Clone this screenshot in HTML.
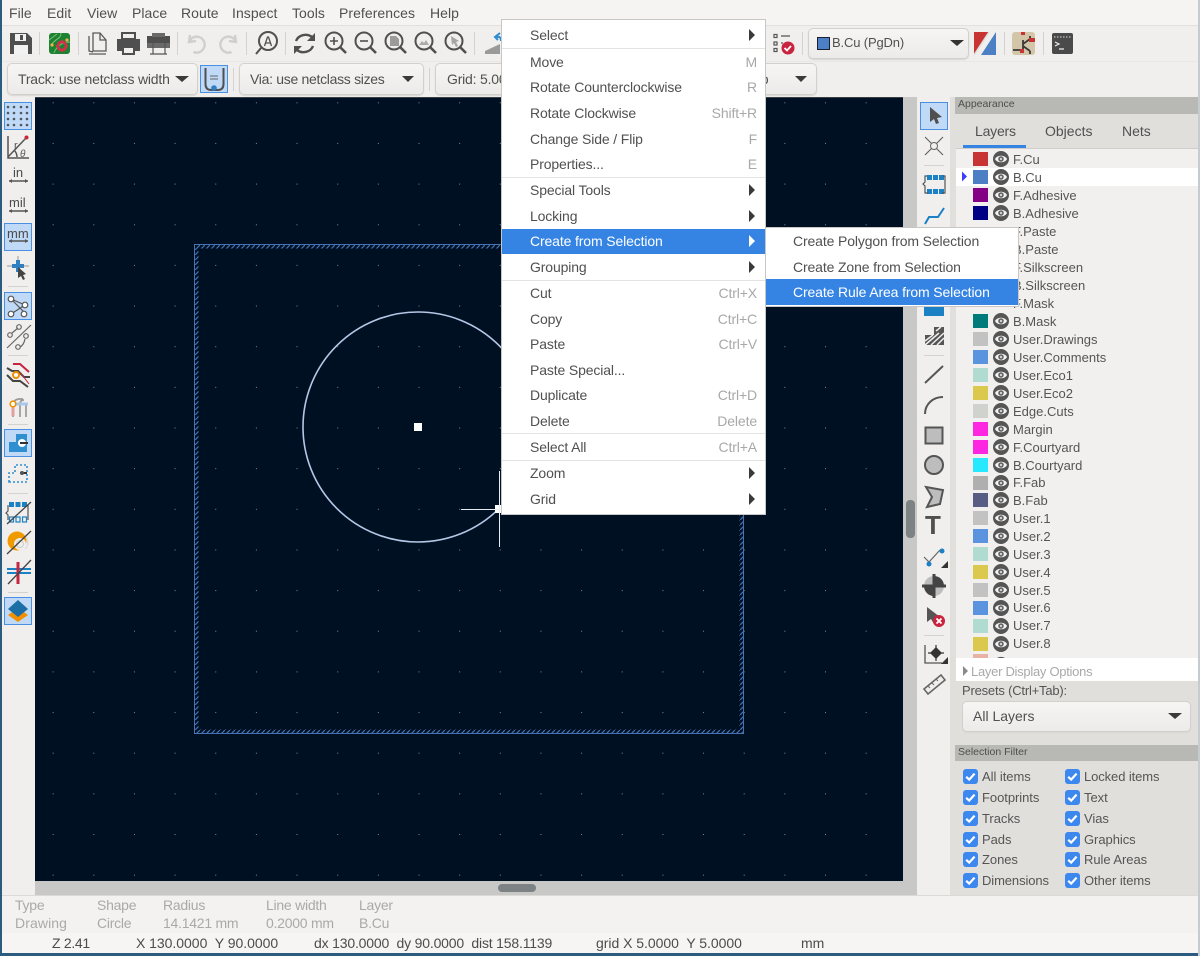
<!DOCTYPE html>
<html><head><meta charset="utf-8"><style>
html,body{margin:0;padding:0;width:1200px;height:956px;overflow:hidden;background:#f2f1ef}
body{position:relative;font:14px/18px "Liberation Sans",sans-serif;color:#505050}
.b,.t{position:absolute}
.t{white-space:nowrap}
.m{font-size:14px;letter-spacing:.05px}
.combo{position:absolute;box-sizing:border-box;background:linear-gradient(#f6f5f4,#edebe9);border:1px solid #d3cfcb;border-radius:5px;box-shadow:0 1px 1px #d8d6d3}
.menu{position:absolute;box-sizing:border-box;background:#fff;border:1px solid #c9c7c5;letter-spacing:-.13px}
.menu .t{color:#505050}
.menu .s{color:#a8a8a8}
.g{color:#a9a9a9;font-size:14px;letter-spacing:-.25px}
.st{color:#4c4c4c;font-size:14px;letter-spacing:-.03px}
.ly{font-size:13px;color:#555;margin-top:1px}
.sf{font-size:13px;color:#555;letter-spacing:-.05px}
.u{font-size:13px;color:#4a4a4a}
</style></head><body>
<!-- backgrounds -->
<div class="b" style="left:0;top:0;width:1200px;height:25px;background:#f5f4f2"></div>
<div class="b" style="left:0;top:25px;width:1200px;height:1px;background:#e2e0dd"></div>
<div class="b" style="left:0;top:26px;width:1200px;height:71px;background:#f0efed"></div>
<div class="b" style="left:0;top:61px;width:1200px;height:1px;background:#e9e7e5"></div>
<div class="b" style="left:2px;top:97px;width:33px;height:800px;background:#f0efed"></div>
<div class="b" style="left:35px;top:97px;width:868px;height:784px;background:#001023"></div>
<div class="b" style="left:35px;top:97px;width:868px;height:1px;background:#3a3f46"></div>
<div class="b" style="left:903px;top:97px;width:14px;height:798px;background:#c8c8c7"></div>
<div class="b" style="left:35px;top:881px;width:882px;height:14px;background:#c8c8c7"></div>
<div class="b" style="left:906px;top:500px;width:9px;height:38px;border-radius:4px;background:#7d8384"></div>
<div class="b" style="left:498px;top:884px;width:38px;height:8px;border-radius:4px;background:#7d8384"></div>
<div class="b" style="left:917px;top:97px;width:33px;height:798px;background:#f0efed"></div>
<div class="b" style="left:950px;top:97px;width:5px;height:798px;background:#e0dfdc"></div>
<div class="b" style="left:955px;top:97px;width:243px;height:798px;background:#e1dfdb"></div>
<div class="b" style="left:955px;top:97px;width:243px;height:17px;background:#b8b8b5"></div>
<div class="b" style="left:956px;top:148px;width:242px;height:510px;background:#f1f0ee"></div>
<div class="b" style="left:956px;top:168px;width:242px;height:18px;background:#fff"></div>
<div class="b" style="left:956px;top:658px;width:242px;height:23px;background:#fff"></div>
<div class="b" style="left:955px;top:745px;width:243px;height:16px;background:#b8b8b5"></div>
<div class="b" style="left:0;top:895px;width:1200px;height:38px;background:#f3f2f0"></div>
<div class="b" style="left:0;top:895px;width:1200px;height:1px;background:#dcdad7"></div>
<div class="b" style="left:0;top:933px;width:1200px;height:21px;background:#f6f5f4"></div>
<div class="b" style="left:0;top:953px;width:1200px;height:3px;background:#2c5b80"></div>
<div class="b" style="left:0;top:0;width:2px;height:956px;background:#2c5b80"></div>
<div class="b" style="left:1198px;top:0;width:2px;height:956px;background:#c5cbd0"></div>

<!-- active buttons -->
<div class="b" style="left:200px;top:65px;width:28px;height:28px;box-sizing:border-box;background:#bfd9f6;border:1px solid #4a90e2"></div>
<div class="b" style="left:4px;top:102px;width:28px;height:28px;box-sizing:border-box;background:#bfd9f6;border:1px solid #4a90e2"></div>
<div class="b" style="left:4px;top:223px;width:28px;height:28px;box-sizing:border-box;background:#bfd9f6;border:1px solid #4a90e2"></div>
<div class="b" style="left:4px;top:292px;width:28px;height:28px;box-sizing:border-box;background:#bfd9f6;border:1px solid #4a90e2"></div>
<div class="b" style="left:4px;top:429px;width:28px;height:28px;box-sizing:border-box;background:#bfd9f6;border:1px solid #4a90e2"></div>
<div class="b" style="left:4px;top:597px;width:28px;height:28px;box-sizing:border-box;background:#bfd9f6;border:1px solid #4a90e2"></div>
<div class="b" style="left:920px;top:102px;width:28px;height:28px;box-sizing:border-box;background:#bfd9f6;border:1px solid #4a90e2"></div>

<!-- combos -->
<div class="combo" style="left:7px;top:63px;width:191px;height:32px"></div>
<div class="combo" style="left:239px;top:63px;width:185px;height:32px"></div>
<div class="combo" style="left:435px;top:63px;width:382px;height:32px"></div>
<div class="combo" style="left:808px;top:28px;width:161px;height:31px"></div>
<div class="combo" style="left:962px;top:701px;width:229px;height:31px"></div>

<svg class="b" style="left:0;top:0" width="1200" height="956" viewBox="0 0 1200 956">
<defs>
<pattern id="grid" patternUnits="userSpaceOnUse" x="12" y="21" width="40.65" height="40.65"><rect x="0" y="0" width="1" height="1" fill="#7d8794"/></pattern>
<pattern id="hatch" patternUnits="userSpaceOnUse" x="0" y="0" width="5" height="5"><path d="M-1 6L6 -1" stroke="#4070b0" stroke-width="1.300" fill="none"/></pattern>
<symbol id="eye" viewBox="0 0 16 16" overflow="visible"><circle cx="8" cy="8" r="8" fill="#555"/><path d="M2 8C4 3.600 12 3.600 14 8 12 12.400 4 12.400 2 8z" fill="#f4f4f4"/><circle cx="8" cy="8" r="2.800" fill="#666"/><circle cx="8" cy="8" r="1.100" fill="#ddd"/></symbol>
<symbol id="cb" viewBox="0 0 15 15" overflow="visible"><rect x="0" y="0" width="15" height="15" rx="3" fill="#3c88ee"/><path d="M3.2 7.8l3 2.8 5.4-6" fill="none" stroke="#fff" stroke-width="2.2"/></symbol>
</defs>
<!-- canvas -->
<rect x="35" y="98" width="868" height="783" fill="url(#grid)"/>
<rect x="196.500" y="246.500" width="545" height="485" fill="none" stroke="url(#hatch)" stroke-width="4"/>
<rect x="194.500" y="244.500" width="549" height="489" fill="none" stroke="#4573b4" stroke-width="1"/>
<circle cx="418" cy="427" r="115" fill="none" stroke="#b4c8e6" stroke-width="1.600"/>
<rect x="414" y="423" width="8" height="8" fill="#fff"/>
<rect x="495" y="505" width="8" height="8" fill="#fff"/>
<path d="M461 509.500H499M499.500 471V547" stroke="#e8edf4" stroke-width="1" fill="none"/>

<!-- separators top -->
<g stroke="#d4d2cf" stroke-width="1">
<path d="M39.500 32V55M78.500 32V55M177.500 32V55M246.500 32V55M285.500 32V55M474.500 32V55M802.500 32V55M1004.500 32V55M1043.500 32V55M233.500 68V91M429.500 68V91"/>
<path d="M8 286.500H28M8 355.500H28M8 424.500H28M8 493.500H28M8 592.500H28M924 165.500H944M924 355.500H944M924 635.500H944"/>
</g>
<!-- top icons -->
<path d="M10 33h17l5 5v16H10z" fill="#4f4f4f"/><rect x="15" y="34" width="11" height="7" fill="#f2f2f2"/><rect x="20" y="35" width="3" height="5" fill="#4f4f4f"/><rect x="14" y="45" width="14" height="9" fill="#f2f2f2"/>
<rect x="49" y="33" width="21" height="21" rx="3" fill="#1d8232"/><path d="M49 40l8-6M61 33c0 6-5 5-10 12M70 42c-8 0-14 5-16 11" stroke="#7fbf75" fill="none"/><circle cx="62" cy="46" r="4" fill="none" stroke="#d3304a" stroke-width="2.600"/><path d="M62 40v2M62 50v2M56 46h2M66 46h2M58 42l1 1M66 50l-1-1M66 42l-1 1M58 50l1-1" stroke="#d3304a" stroke-width="2"/><circle cx="52" cy="45" r="1.600" fill="#e7b34c"/><circle cx="67" cy="40" r="1.600" fill="#e7b34c"/>
<g fill="none" stroke="#5a5a5a" stroke-width="1.300"><path d="M93 33h7l6 7v11H93z"/><path d="M89 36v15l4 1M100 33v7h6M89 54h17"/></g>
<path d="M122 33h13v6h-13z" fill="none" stroke="#4f4f4f" stroke-width="2"/><path d="M117 39h23v12h-5v-5h-13v5h-5z" fill="#4f4f4f"/><rect x="123" y="47" width="11" height="7" fill="none" stroke="#4f4f4f" stroke-width="2"/>
<path d="M147 36h23v7h-23z" fill="#4f4f4f"/><path d="M152 33h13v4h-13z" fill="#6a6a6a"/><path d="M147 43h23v5h-23z" fill="#6a6a6a"/><path d="M153 43v11M165 43v11M150 54h17" stroke="#555" fill="none" stroke-width="1.200"/>
<g fill="none" stroke="#cfcfcd" stroke-width="2.400"><path d="M190 35l-1 7 7-1M189.500 41a8 8 0 1 1 4 11"/><path d="M235 35l1 7-7-1M235.500 41a8 8 0 1 0-4 11"/></g>
<g fill="none" stroke="#505050" stroke-width="2"><circle cx="268" cy="41" r="9"/><path d="M261 48l-5 6"/></g><path d="M264.500 46l3-9h1l3 9M265.500 43h5" fill="none" stroke="#505050" stroke-width="1.300"/>
<g fill="none" stroke="#505050" stroke-width="2.400"><path d="M296 41a10 9 0 0 1 16-4M313 46a10 9 0 0 1-16 4"/></g><path d="M315 33v8h-8zM294 54v-8h8z" fill="#505050"/>
<g fill="none" stroke="#505050" stroke-width="2"><circle cx="334" cy="41" r="8.500"/><path d="M340 47l6 6" stroke-width="2.600"/><path d="M330 41h8M334 37v8" stroke-width="1.600"/><circle cx="364" cy="41" r="8.500"/><path d="M370 47l6 6" stroke-width="2.600"/><path d="M360 41h8" stroke-width="1.600"/><circle cx="394" cy="41" r="8.500"/><path d="M400 47l6 6" stroke-width="2.600"/><circle cx="424" cy="41" r="8.500"/><path d="M430 47l6 6" stroke-width="2.600"/><circle cx="454" cy="41" r="8.500"/><path d="M460 47l6 6" stroke-width="2.600"/></g>
<path d="M390 36h6l3 3v7h-9z" fill="#9b9b9b"/><path d="M419 45l3-4 2 2 2-3 3 5z" fill="#aaa"/><path d="M451 36l8 5-3 1 2 4-2 1-2-4-2 2z" fill="#a5a5a5"/>
<path d="M485 51l15-7v10h-15z" fill="#9a9a9a"/><path d="M500 33l-5 4 3 3M496 37c4-1 5 1 5 4" fill="none" stroke="#2f8bd0" stroke-width="2"/>
<!-- checklist -->
<g fill="none" stroke="#555" stroke-width="1.200"><rect x="774" y="34.500" width="3" height="3"/><rect x="774" y="42" width="3" height="3"/><rect x="774" y="48.500" width="3" height="3"/><path d="M781 36h9M781 43h2"/></g><circle cx="788" cy="48" r="6.500" fill="#c8233f"/><path d="M784.500 48l2.500 2.500 4-4.500" fill="none" stroke="#fff" stroke-width="1.800"/>
<rect x="817.500" y="37.500" width="12" height="12" fill="#4d7fc4" stroke="#1a2030"/>
<path d="M950 40h14l-7 6z" fill="#333"/><path d="M175 76h14l-7 6z" fill="#3a3a3a"/><path d="M402 76h12l-6 6z" fill="#3a3a3a"/><path d="M795 76h12l-6 6z" fill="#3a3a3a"/><path d="M1168 713h14l-7 6z" fill="#3a3a3a"/>
<path d="M974 32h15l-15 23z" fill="#c83434"/><path d="M996 32v23h-15l15-23z" fill="#4d7fc4"/><path d="M989 32l-15 23" stroke="#ddd" stroke-width="1.500"/>
<rect x="1012" y="32" width="23" height="23" rx="3" fill="#d3c5a8"/><path d="M1013 50h10M1023 40v10M1023 44l7-5M1023 46l7 5M1030 36v4M1030 51v3" stroke="#3a3a3a" stroke-width="1.800" fill="none"/><rect x="1021" y="32" width="4" height="3" fill="#c83434"/><rect x="1029" y="38" width="6" height="4" fill="#c83434"/><rect x="1020" y="49" width="4" height="4" fill="#c83434"/>
<rect x="1052" y="33" width="21" height="21" rx="2" fill="#4a4a4a"/><path d="M1054 37h17" stroke="#ddd" stroke-dasharray="1.500 1.500" stroke-width="1"/><path d="M1055 42l4 2-4 2M1059 49h5" fill="none" stroke="#eee" stroke-width="1.200"/>
<!-- track width button -->
<path d="M205.500 68V84q0 6 6 6h6q6 0 6-6V68" fill="none" stroke="#505050" stroke-width="2"/><path d="M210 76h8M210 79h8" stroke="#666" stroke-width="1"/><circle cx="214" cy="88" r="2.800" fill="#2f7fc1"/>
<!-- left icons -->
<g fill="#4f5760"><circle cx="8" cy="107" r="1.300"/><circle cx="14" cy="107" r="1.300"/><circle cx="21" cy="107" r="1.300"/><circle cx="27" cy="107" r="1.300"/><circle cx="8" cy="113" r="1.300"/><circle cx="14" cy="113" r="1.300"/><circle cx="21" cy="113" r="1.300"/><circle cx="27" cy="113" r="1.300"/><circle cx="8" cy="119" r="1.300"/><circle cx="14" cy="119" r="1.300"/><circle cx="21" cy="119" r="1.300"/><circle cx="27" cy="119" r="1.300"/><circle cx="8" cy="125" r="1.300"/><circle cx="14" cy="125" r="1.300"/><circle cx="21" cy="125" r="1.300"/><circle cx="27" cy="125" r="1.300"/></g>
<path d="M8 136v22h21M8 157l18-19M17 157c0-3-1-5-3-7" fill="none" stroke="#555" stroke-width="1.500"/><circle cx="26.500" cy="137.500" r="2" fill="#c8233f"/>
<g fill="none" stroke="#555" stroke-width="1.500"><path d="M9 181h19M9 211h19M9 241h19"/></g>
<path d="M9 181l3-2v4zM28 181l-3-2v4zM9 211l3-2v4zM28 211l-3-2v4zM9 241l3-2v4zM28 241l-3-2v4z" fill="#555"/>
<path d="M7 266h22M18 256v10" stroke="#999" stroke-width="1"/><rect x="12" y="264" width="12" height="4" fill="#2f7fc1"/><rect x="16" y="260" width="4" height="12" fill="#2f7fc1"/><path d="M18 267l8 7-3 1 2 4-2 1-2-4-3 2z" fill="#444"/>
<!-- ratsnest -->
<g fill="#fff" stroke="#555" stroke-width="1.200"><path d="M11 299l15 15M11 314l14-9M11 299l14 6" fill="none"/><circle cx="11" cy="299" r="2.800"/><circle cx="25" cy="305" r="2.800"/><circle cx="11" cy="314" r="2.800"/><circle cx="24" cy="314" r="2.800"/></g>
<g fill="none" stroke="#666" stroke-width="1.200"><path d="M7 348l24-23"/><circle cx="10" cy="335" r="2.300"/><circle cx="19" cy="327" r="2.300"/><circle cx="26" cy="336" r="2.300"/><circle cx="18" cy="347" r="2.300"/><path d="M12 333l6-5M25 339c-1 5-3 7-5 8"/></g>
<!-- highlight -->
<g fill="none" stroke-width="2"><path d="M7 368l5 3h6l6 6h6" stroke="#444"/><path d="M13 364h7l9 8" stroke="#c8233f"/><path d="M7 375l6 6h7l8 6" stroke="#444"/><path d="M20 372l9 12" stroke="#c8233f" stroke-width="1"/></g><circle cx="16" cy="375" r="3" fill="#fff" stroke="#f09000" stroke-width="2"/>
<g fill="none" stroke="#9a9a9a" stroke-width="1.700"><path d="M13 417v-11q0-7 7-7h3"/><path d="M20 417v-13q0-4 4-4M26 417v-12"/></g><path d="M13 407v9" stroke="#e3a0a0" stroke-width="3"/><path d="M13 404h15" stroke="#a8c8e8" stroke-width="3"/><circle cx="13" cy="404" r="2.800" fill="#fff" stroke="#f09000" stroke-width="1.600"/>
<!-- zones left -->
<path d="M9 452v-10h7v-8h11v18z" fill="#2f8fd0"/><circle cx="22" cy="443" r="4" fill="#fff"/><path d="M20 443h8" stroke="#333" stroke-width="2"/>
<path d="M9 482v-9h6v-8h12v17z" fill="none" stroke="#2f8fd0" stroke-width="1.600" stroke-dasharray="2 2"/><path d="M20 473h7" stroke="#333" stroke-width="2"/><circle cx="22" cy="473" r="2" fill="#555"/>
<!-- footprint off -->
<g><rect x="9" y="502" width="5" height="5" fill="#1b80c4"/><rect x="15.500" y="502" width="5" height="5" fill="#1b80c4"/><rect x="22" y="502" width="5" height="5" fill="#1b80c4"/><g fill="none" stroke="#1b80c4" stroke-width="1.200"><rect x="9.500" y="517" width="4" height="5"/><rect x="16" y="517" width="4" height="5"/><rect x="22.500" y="517" width="4" height="5"/></g><path d="M8 505v6l-2 2 2 2v5M28 505v15" fill="none" stroke="#555" stroke-width="1.200"/><path d="M7 524l24-22" stroke="#444" stroke-width="1.300"/></g>
<circle cx="17" cy="541" r="9.500" fill="#f09a00"/><circle cx="20" cy="544" r="6" fill="#f0efed"/><circle cx="20" cy="544" r="3.500" fill="none" stroke="#ccc"/><path d="M26 537a9 9 0 0 1-1 12" fill="none" stroke="#ddd" stroke-width="1.500"/><path d="M7 554l24-23" stroke="#444" stroke-width="1.300"/>
<path d="M7 569h24M7 573h24" stroke="#1b80c4" stroke-width="2"/><path d="M18 562v22" stroke="#c8233f" stroke-width="3"/><path d="M8 584l23-24" stroke="#444" stroke-width="1.300"/>
<path d="M18 608l10 7-10 7-10-7z" fill="#f09000"/><path d="M18 600l10 9-10 8-10-8z" fill="#1b6ea6"/>
<!-- right icons -->
<path d="M930 107l0 15 4-3 2 5 3-1-2-5 5-1z" fill="#4f4f4f"/>
<path d="M925 137l18 18M943 137l-18 18" stroke="#666" stroke-width="1.200"/><circle cx="934" cy="146" r="3.500" fill="#f0efed" stroke="#666"/>
<g fill="#1b80c4"><rect x="927" y="175" width="5" height="5"/><rect x="933" y="175" width="5" height="5"/><rect x="939" y="175" width="5" height="5"/><rect x="927" y="189" width="5" height="5"/><rect x="933" y="189" width="5" height="5"/><rect x="939" y="189" width="5" height="5"/></g><path d="M927 176h-2v6l-2 2 2 2v7h3M943 176h2v17h-3" fill="none" stroke="#555" stroke-width="1.200"/>
<path d="M925 224l4-7h9l6-9" fill="none" stroke="#1b80c4" stroke-width="2"/>
<rect x="924" y="306" width="20" height="10" fill="#1b80c4"/>
<path d="M925 345v-10h9v-8h10v18z" fill="#555"/><path d="M925 341l8 -6M925 345l14-12M931 345l13-12M937 345l7-7M936 331l5-4" stroke="#eee" stroke-width="1.500"/>
<path d="M925 383l18-17" stroke="#555" stroke-width="2"/>
<path d="M925 414c0-10 8-17 18-17" fill="none" stroke="#555" stroke-width="2"/>
<rect x="925.500" y="427.500" width="17" height="16" fill="#bdbdbd" stroke="#555" stroke-width="2"/>
<circle cx="934" cy="465" r="9" fill="#bdbdbd" stroke="#555" stroke-width="2"/>
<path d="M926 487l17 3-3 14-13 3 5-10z" fill="#bdbdbd" stroke="#555" stroke-width="2"/>
<path d="M924 557l5 5 11-12" fill="none" stroke="#666" stroke-width="1.200"/><circle cx="929" cy="564" r="2.500" fill="#1b80c4"/><circle cx="942" cy="551" r="2.500" fill="#1b80c4"/><path d="M948 561v7h-7z" fill="#333"/>
<circle cx="934" cy="586" r="10" fill="#bdbdbd"/><path d="M934 574v24M922 586h24" stroke="#444" stroke-width="3"/><path d="M934 576a10 10 0 0 1 10 10h-10zM934 596a10 10 0 0 1-10-10h10z" fill="#444"/>
<path d="M927 607v15l4-3 3 5 3-1-2-5 5-1z" fill="#555"/><circle cx="939" cy="621" r="6" fill="#c8233f"/><path d="M936.500 618.500l5 5M941.500 618.500l-5 5" stroke="#fff" stroke-width="1.800"/>
<path d="M925 645v18h17" fill="none" stroke="#555" stroke-width="1.300"/><path d="M936 647l6 6-6 6-6-6z" fill="#333"/><path d="M936 645v16M928 653h16" stroke="#333" stroke-width="1.200"/><path d="M948 657v7h-7z" fill="#333"/>
<path d="M924 689l17-14 4 5-17 14z" fill="#f0efed" stroke="#666" stroke-width="1.600"/><path d="M928 686l2 2M932 683l2 2M936 679l2 2" stroke="#666"/>
<!-- layers -->
<rect x="973" y="152" width="15" height="14" fill="#c83434"/><rect x="973" y="170" width="15" height="14" fill="#4d7fc4"/><rect x="973" y="188" width="15" height="14" fill="#840084"/><rect x="973" y="206" width="15" height="14" fill="#000084"/>
<rect x="973" y="314" width="15" height="14" fill="#007b7b"/><rect x="973" y="332" width="15" height="14" fill="#c2c2c2"/><rect x="973" y="350" width="15" height="14" fill="#5a94de"/><rect x="973" y="368" width="15" height="14" fill="#b0dbd0"/><rect x="973" y="386" width="15" height="14" fill="#dbc94d"/><rect x="973" y="404" width="15" height="14" fill="#d0d2cd"/><rect x="973" y="422" width="15" height="14" fill="#ff26e2"/><rect x="973" y="440" width="15" height="14" fill="#ff26e2"/><rect x="973" y="458" width="15" height="14" fill="#26e9ff"/><rect x="973" y="476" width="15" height="14" fill="#afafaf"/><rect x="973" y="493" width="15" height="14" fill="#585d84"/><rect x="973" y="511" width="15" height="14" fill="#c2c2c2"/><rect x="973" y="529" width="15" height="14" fill="#5a94de"/><rect x="973" y="547" width="15" height="14" fill="#b0dbd0"/><rect x="973" y="565" width="15" height="14" fill="#dbc94d"/><rect x="973" y="583" width="15" height="14" fill="#c2c2c2"/><rect x="973" y="601" width="15" height="14" fill="#5a94de"/><rect x="973" y="619" width="15" height="14" fill="#b0dbd0"/><rect x="973" y="637" width="15" height="14" fill="#dbc94d"/><rect x="973" y="654" width="15" height="4" fill="#e8b2a7"/>
<path d="M962 171.500l5 5-5 5z" fill="#3d3dff"/>
<use href="#eye" x="993" y="151" width="16" height="16"/><use href="#eye" x="993" y="169" width="16" height="16"/><use href="#eye" x="993" y="187" width="16" height="16"/><use href="#eye" x="993" y="205" width="16" height="16"/><use href="#eye" x="993" y="313" width="16" height="16"/><use href="#eye" x="993" y="331" width="16" height="16"/><use href="#eye" x="993" y="349" width="16" height="16"/><use href="#eye" x="993" y="367" width="16" height="16"/><use href="#eye" x="993" y="385" width="16" height="16"/><use href="#eye" x="993" y="403" width="16" height="16"/><use href="#eye" x="993" y="421" width="16" height="16"/><use href="#eye" x="993" y="439" width="16" height="16"/><use href="#eye" x="993" y="457" width="16" height="16"/><use href="#eye" x="993" y="475" width="16" height="16"/><use href="#eye" x="993" y="492" width="16" height="16"/><use href="#eye" x="993" y="510" width="16" height="16"/><use href="#eye" x="993" y="528" width="16" height="16"/><use href="#eye" x="993" y="546" width="16" height="16"/><use href="#eye" x="993" y="564" width="16" height="16"/><use href="#eye" x="993" y="582" width="16" height="16"/><use href="#eye" x="993" y="600" width="16" height="16"/><use href="#eye" x="993" y="618" width="16" height="16"/><use href="#eye" x="993" y="636" width="16" height="16"/>
<path d="M997 658a8 8 0 0 1 8 0z" fill="#555"/>
<path d="M963 666l5 5-5 5z" fill="#8a8a8a"/>
<!-- checkboxes -->
<use href="#cb" x="963" y="769" width="15" height="15"/><use href="#cb" x="963" y="790" width="15" height="15"/><use href="#cb" x="963" y="811" width="15" height="15"/><use href="#cb" x="963" y="832" width="15" height="15"/><use href="#cb" x="963" y="852" width="15" height="15"/><use href="#cb" x="963" y="873" width="15" height="15"/>
<use href="#cb" x="1065" y="769" width="15" height="15"/><use href="#cb" x="1065" y="790" width="15" height="15"/><use href="#cb" x="1065" y="811" width="15" height="15"/><use href="#cb" x="1065" y="832" width="15" height="15"/><use href="#cb" x="1065" y="852" width="15" height="15"/><use href="#cb" x="1065" y="873" width="15" height="15"/>
</svg>

<!-- menubar -->
<div class="t m" style="left:9px;top:4px">File</div>
<div class="t m" style="left:47px;top:4px">Edit</div>
<div class="t m" style="left:87px;top:4px">View</div>
<div class="t m" style="left:132px;top:4px">Place</div>
<div class="t m" style="left:181px;top:4px">Route</div>
<div class="t m" style="left:232px;top:4px">Inspect</div>
<div class="t m" style="left:292px;top:4px">Tools</div>
<div class="t m" style="left:339px;top:4px">Preferences</div>
<div class="t m" style="left:430px;top:4px">Help</div>
<!-- toolbar text -->
<div class="t" style="left:18px;top:70px;letter-spacing:-.2px">Track: use netclass width</div>
<div class="t" style="left:250px;top:70px;letter-spacing:-.3px">Via: use netclass sizes</div>
<div class="t" style="left:447px;top:70px;letter-spacing:-.2px">Grid: 5.0000 mm</div>
<div class="t" style="left:757px;top:70px">to</div>
<div class="t" style="left:832px;top:34px;font-size:13px;letter-spacing:-.15px">B.Cu (PgDn)</div>
<!-- left units -->
<div class="t u" style="left:13px;top:164px">in</div>
<div class="t u" style="left:9px;top:194px">mil</div>
<div class="t u" style="left:7px;top:225px">mm</div>
<div class="t" style="left:14px;top:137px;font-size:11px;color:#555">r</div>
<div class="t" style="left:20px;top:146px;font-size:10px;font-style:italic;color:#555">&theta;</div>
<div class="t" style="left:925px;top:512px;font:bold 26px/26px 'Liberation Sans',sans-serif;color:#4f4f4f">T</div>
<!-- appearance -->
<div class="t" style="left:958px;top:95px;font-size:10.500px;color:#4e4e4e">Appearance</div>
<div class="b" style="left:956px;top:116px;width:242px;height:32px;background:#e1dfdb"></div>
<div class="b" style="left:956px;top:148px;width:242px;height:1px;background:#cfcdc9"></div>
<div class="b" style="left:963px;top:145px;width:63px;height:3px;background:#3584e4"></div>
<div class="t" style="left:975px;top:122px;letter-spacing:-.2px">Layers</div>
<div class="t" style="left:1045px;top:122px">Objects</div>
<div class="t" style="left:1122px;top:122px">Nets</div>
<div class="t ly" style="left:1013px;top:150px">F.Cu</div>
<div class="t ly" style="left:1013px;top:168px">B.Cu</div>
<div class="t ly" style="left:1013px;top:186px">F.Adhesive</div>
<div class="t ly" style="left:1013px;top:204px">B.Adhesive</div>
<div class="t ly" style="left:1013px;top:222px">F.Paste</div>
<div class="t ly" style="left:1013px;top:240px">B.Paste</div>
<div class="t ly" style="left:1013px;top:258px">F.Silkscreen</div>
<div class="t ly" style="left:1013px;top:276px">B.Silkscreen</div>
<div class="t ly" style="left:1013px;top:294px">F.Mask</div>
<div class="t ly" style="left:1013px;top:312px">B.Mask</div>
<div class="t ly" style="left:1013px;top:330px">User.Drawings</div>
<div class="t ly" style="left:1013px;top:348px">User.Comments</div>
<div class="t ly" style="left:1013px;top:366px">User.Eco1</div>
<div class="t ly" style="left:1013px;top:384px">User.Eco2</div>
<div class="t ly" style="left:1013px;top:402px">Edge.Cuts</div>
<div class="t ly" style="left:1013px;top:420px">Margin</div>
<div class="t ly" style="left:1013px;top:438px">F.Courtyard</div>
<div class="t ly" style="left:1013px;top:456px">B.Courtyard</div>
<div class="t ly" style="left:1013px;top:473px">F.Fab</div>
<div class="t ly" style="left:1013px;top:491px">B.Fab</div>
<div class="t ly" style="left:1013px;top:509px">User.1</div>
<div class="t ly" style="left:1013px;top:527px">User.2</div>
<div class="t ly" style="left:1013px;top:545px">User.3</div>
<div class="t ly" style="left:1013px;top:563px">User.4</div>
<div class="t ly" style="left:1013px;top:581px">User.5</div>
<div class="t ly" style="left:1013px;top:598px">User.6</div>
<div class="t ly" style="left:1013px;top:616px">User.7</div>
<div class="t ly" style="left:1013px;top:634px">User.8</div>
<div class="t" style="left:971px;top:663px;font-size:13px;letter-spacing:-.28px;color:#a9a9a9">Layer Display Options</div>
<div class="t sf" style="left:962px;top:682px;letter-spacing:-.2px">Presets (Ctrl+Tab):</div>
<div class="t" style="left:973px;top:707px">All Layers</div>
<div class="t" style="left:958px;top:743px;font-size:10.500px;color:#4e4e4e">Selection Filter</div>
<div class="t sf" style="left:982px;top:768px">All items</div>
<div class="t sf" style="left:982px;top:789px">Footprints</div>
<div class="t sf" style="left:982px;top:810px">Tracks</div>
<div class="t sf" style="left:982px;top:831px">Pads</div>
<div class="t sf" style="left:982px;top:851px">Zones</div>
<div class="t sf" style="left:982px;top:872px;letter-spacing:-.1px">Dimensions</div>
<div class="t sf" style="left:1084px;top:768px;letter-spacing:-.1px">Locked items</div>
<div class="t sf" style="left:1084px;top:789px">Text</div>
<div class="t sf" style="left:1084px;top:810px">Vias</div>
<div class="t sf" style="left:1084px;top:831px">Graphics</div>
<div class="t sf" style="left:1084px;top:851px">Rule Areas</div>
<div class="t sf" style="left:1084px;top:872px">Other items</div>
<!-- status -->
<div class="t g" style="left:15px;top:896px">Type</div>
<div class="t g" style="left:15px;top:914px;letter-spacing:.1px">Drawing</div>
<div class="t g" style="left:97px;top:896px">Shape</div>
<div class="t g" style="left:97px;top:914px">Circle</div>
<div class="t g" style="left:163px;top:896px">Radius</div>
<div class="t g" style="left:163px;top:914px">14.1421 mm</div>
<div class="t g" style="left:266px;top:896px">Line width</div>
<div class="t g" style="left:266px;top:914px">0.2000 mm</div>
<div class="t g" style="left:359px;top:896px">Layer</div>
<div class="t g" style="left:359px;top:914px">B.Cu</div>
<div class="t st" style="left:52px;top:934px;letter-spacing:-.3px">Z 2.41</div>
<div class="t st" style="left:136px;top:934px">X 130.0000&nbsp; Y 90.0000</div>
<div class="t st" style="left:314px;top:934px;letter-spacing:-.18px">dx 130.0000&nbsp; dy 90.0000&nbsp; dist 158.1139</div>
<div class="t st" style="left:596px;top:934px">grid X 5.0000&nbsp; Y 5.0000</div>
<div class="t st" style="left:801px;top:934px">mm</div>

<!-- context menu -->
<div class="menu" style="left:501px;top:19px;width:265px;height:496px">
<div class="b" style="left:0;top:28px;width:263px;height:1px;background:#e4e3e1"></div>
<div class="b" style="left:0;top:157px;width:263px;height:1px;background:#e4e3e1"></div>
<div class="b" style="left:0;top:260px;width:263px;height:1px;background:#e4e3e1"></div>
<div class="b" style="left:0;top:413px;width:263px;height:1px;background:#e4e3e1"></div>
<div class="b" style="left:0;top:440px;width:263px;height:1px;background:#e4e3e1"></div>
<div class="b" style="left:0;top:209px;width:263px;height:25px;background:#3584e4"></div>
<div class="t" style="left:28px;top:6px">Select</div>
<div class="t" style="left:28px;top:33px">Move</div><div class="t s" style="right:8px;top:33px">M</div>
<div class="t" style="left:28px;top:58px">Rotate Counterclockwise</div><div class="t s" style="right:8px;top:58px">R</div>
<div class="t" style="left:28px;top:84px">Rotate Clockwise</div><div class="t s" style="right:8px;top:84px">Shift+R</div>
<div class="t" style="left:28px;top:110px">Change Side / Flip</div><div class="t s" style="right:8px;top:110px">F</div>
<div class="t" style="left:28px;top:135px">Properties...</div><div class="t s" style="right:8px;top:135px">E</div>
<div class="t" style="left:28px;top:161px">Special Tools</div>
<div class="t" style="left:28px;top:187px">Locking</div>
<div class="t" style="left:28px;top:212px;color:#fff">Create from Selection</div>
<div class="t" style="left:28px;top:238px">Grouping</div>
<div class="t" style="left:28px;top:264px">Cut</div><div class="t s" style="right:8px;top:264px">Ctrl+X</div>
<div class="t" style="left:28px;top:290px">Copy</div><div class="t s" style="right:8px;top:290px">Ctrl+C</div>
<div class="t" style="left:28px;top:315px">Paste</div><div class="t s" style="right:8px;top:315px">Ctrl+V</div>
<div class="t" style="left:28px;top:341px">Paste Special...</div>
<div class="t" style="left:28px;top:366px">Duplicate</div><div class="t s" style="right:8px;top:366px">Ctrl+D</div>
<div class="t" style="left:28px;top:392px">Delete</div><div class="t s" style="right:8px;top:392px">Delete</div>
<div class="t" style="left:28px;top:418px">Select All</div><div class="t s" style="right:8px;top:418px">Ctrl+A</div>
<div class="t" style="left:28px;top:444px">Zoom</div>
<div class="t" style="left:28px;top:470px">Grid</div>
<svg class="b" style="left:0;top:0" width="263" height="494"><path d="M247 9l6 6-6 6zM247 164l6 6-6 6zM247 190l6 6-6 6zM247 241l6 6-6 6zM247 447l6 6-6 6zM247 473l6 6-6 6z" fill="#3a3a3a"/><path d="M247 215l6 6-6 6z" fill="#fff"/></svg>
</div>
<!-- submenu -->
<div class="menu" style="left:765px;top:227px;width:254px;height:80px">
<div class="b" style="left:0;top:51px;width:252px;height:26px;background:#3584e4"></div>
<div class="t" style="left:27px;top:4px">Create Polygon from Selection</div>
<div class="t" style="left:27px;top:30px">Create Zone from Selection</div>
<div class="t" style="left:27px;top:55px;color:#fff">Create Rule Area from Selection</div>
</div>
</body></html>
